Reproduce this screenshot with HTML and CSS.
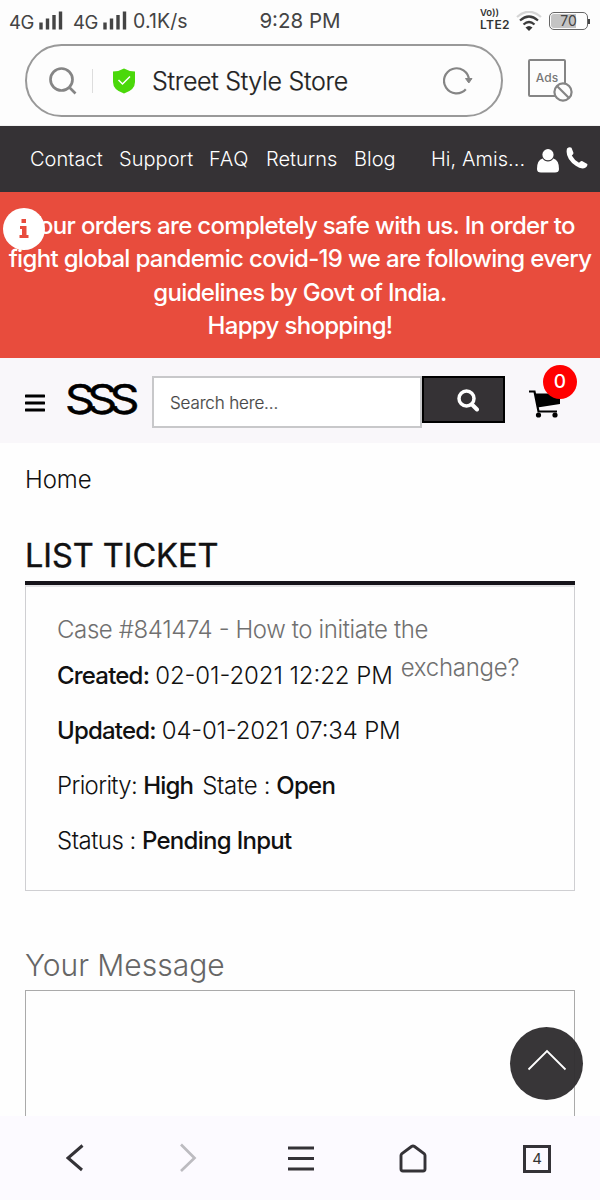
FILE: index.html
```html
<!DOCTYPE html>
<html lang="en">
<head>
<meta charset="utf-8">
<title>Street Style Store</title>
<link rel="stylesheet" href="styles.css">
</head>
<body>
<div class="screen">
  <header class="browser">
    <div class="status">
      <div class="status-left">
        <span class="net">4G</span>
        <svg class="bars" width="24" height="19" viewBox="0 0 24 19"><path d="M2 18.500v-7M8.500 18.500v-11M15 18.500V4M21.500 18.500V0.500" stroke="#444" stroke-width="3.400" fill="none"/></svg>
        <span class="net net-second">4G</span>
        <svg class="bars" width="24" height="19" viewBox="0 0 24 19"><path d="M2 18.500v-7M8.500 18.500v-11M15 18.500V4M21.500 18.500V0.500" stroke="#444" stroke-width="3.400" fill="none"/></svg>
        <span class="speed">0.1K/s</span>
      </div>
      <div class="time">9:28 PM</div>
      <div class="status-right">
        <div class="volte"><span class="vo">Vo))</span><span class="lte">LTE2</span></div>
        <svg class="wifi" width="26" height="20" viewBox="0 0 26 20"><g fill="none" stroke-width="2.200"><path d="M1 6Q13-4.500 25 6" stroke="#d5d5d5"/><path d="M4 9.500q9-8 18 0M7.500 13.500q5.500-5 11 0" stroke="#3c3c3c"/></g><path d="M9.500 16.500q3.500-3 7 0L13 20z" fill="#333"/></svg>
        <div class="battery"><span class="level">70</span></div>
      </div>
    </div>
    <div class="address-row">
      <div class="address">
        <svg class="find" width="28" height="28" viewBox="0 0 28 28"><g fill="none" stroke="#858585" stroke-width="2.700"><circle cx="12.500" cy="12.500" r="11"/><path d="M20 20l6.500 6.500"/></g></svg>
        <span class="split"></span>
        <svg class="shield" width="24" height="26" viewBox="0 0 24 26"><path d="M12 .5Q17 3.500 23 3.500V14q0 8-11 11.500Q1 22 1 14V3.500Q7 3.500 12 .5z" fill="#4ad80a"/><path d="M6.500 12l4 4 7.500-7.500" fill="none" stroke="#fff" stroke-width="1.500"/></svg>
        <span class="site">Street Style Store</span>
        <svg class="reload" width="30" height="30" viewBox="0 0 30 30"><path d="M22.800 23.200A12.500 12.500 0 1 1 26 14" fill="none" stroke="#858585" stroke-width="2.200"/><path d="M22.500 12.500h6.500l-3.200 4.500z" fill="#858585" stroke="#858585" stroke-linejoin="round"/></svg>
      </div>
      <div class="ads">Ads<svg class="ads-stop" width="20" height="20" viewBox="0 0 20 20"><g fill="#fdfdfd" stroke="#858585" stroke-width="2.200"><circle cx="10" cy="10" r="8.600"/><path d="M4 4l12 12"/></g></svg></div>
    </div>
  </header>
  <nav class="topnav">
    <a class="n-contact">Contact</a><a class="n-support">Support</a><a class="n-faq">FAQ</a><a class="n-returns">Returns</a><a class="n-blog">Blog</a><a class="n-user">Hi, Amis...</a>
    <svg class="person" width="22" height="24" viewBox="0 0 22 24"><path d="M5.600 9.500Q0 11 0 20q0 3.500 4 3.500h14q4 0 4-3.500 0-9-5.600-10.500Q14.500 12.500 11 12.500T5.600 9.500z" fill="#fff"/><circle cx="11" cy="5.700" r="5.600" fill="#fff"/></svg>
    <svg class="phone" width="22" height="22" viewBox="0 0 22 22"><path d="M1 1.500Q3.500-.5 5.500.8L7.500 6Q7.500 7 5.800 8.500 8.500 13.500 13 15.800 14.800 13.700 16 14L21.300 17q.6 2-1.600 3.500-4 2.500-10-1.700Q-1.300 11 1 1.500z" fill="#fff"/></svg>
  </nav>
  <section class="notice">
    <p><span class="l1">Your orders are completely safe with us. In order to</span><br><span class="l2">fight global pandemic covid-19 we are following every</span><br><span class="l3">guidelines by Govt of India.</span><br><span class="l4">Happy shopping!</span></p>
    <div class="info"><svg width="10" height="20" viewBox="0 0 10 20"><path d="M2.500 0h4.500v4H2.500zM1 7h6.500v9H9.500v3H.5v-3h2.500v-6H1z" fill="#e84c3d"/></svg></div>
  </section>
  <section class="shop">
    <svg class="burger" width="20" height="18" viewBox="0 0 20 18"><path d="M1 2h18M1 9h18M1 16h18" stroke="#000" stroke-width="3.200" stroke-linecap="round"/></svg>
    <div class="logo"><span>SSS</span></div>
    <div class="search">Search here...</div>
    <div class="go"><svg width="22" height="23" viewBox="0 0 22 23"><circle cx="9.500" cy="9.500" r="7.500" fill="none" stroke="#fff" stroke-width="3.500"/><path d="M15 15.500l5 5" stroke="#fff" stroke-width="4" stroke-linecap="round"/></svg></div>
    <div class="cart"><svg width="32" height="28" viewBox="0 0 32 28"><path d="M0 1.500h5.500L9.500 21.500H28" fill="none" stroke="#000" stroke-width="2.200"/><path d="M6 3.500h25V14L8.500 17.500z"/><circle cx="9.500" cy="25" r="2.600"/><circle cx="26" cy="25" r="2.600"/></svg><span class="count">0</span></div>
  </section>
  <main class="content">
    <div class="crumb"><span>Home</span></div>
    <h1><span>LIST TICKET</span></h1>
    <div class="ticket">
      <div class="case"><span>Case #841474 - How to initiate the</span></div>
      <div class="row"><b>Created:</b><span class="v1">02-01-2021 12:22 PM</span><span class="tail">exchange?</span></div>
      <div class="row"><b class="upd">Updated:</b><span class="v2">04-01-2021 07:34 PM</span></div>
      <div class="row"><span class="pri">Priority:</span><b class="high">High</b><span class="state">State :</span><b class="open">Open</b></div>
      <div class="row"><span class="stat">Status :</span><b class="pend">Pending Input</b></div>
    </div>
    <h2><span>Your Message</span></h2>
    <div class="message"></div>
    <div class="to-top"><svg width="40" height="22" viewBox="0 0 40 22"><path d="M1.500 20.500L20 2l18.500 18.500" fill="none" stroke="#fff" stroke-width="1.800"/></svg></div>
  </main>
  <footer class="tools">
    <svg class="back" width="18" height="28" viewBox="0 0 18 28"><path d="M16.500 1.500L2 14l14 12" fill="none" stroke="#343237" stroke-width="3"/></svg>
    <svg class="forward" width="18" height="30" viewBox="0 0 18 30"><path d="M2 1.500L15.500 15 2 28" fill="none" stroke="#bcbbc0" stroke-width="2.700"/></svg>
    <svg class="menu" width="26" height="25" viewBox="0 0 26 25"><path d="M0 2h26M0 12.500h26M0 23h26" stroke="#343237" stroke-width="2.800"/></svg>
    <svg class="home" width="28" height="29" viewBox="0 0 28 29"><path d="M2 11.500q0-1 1-2L12.500 2.500q1.500-1 3 0L25 9.500q1 1 1 2V25q0 2-2 2H4q-2 0-2-2z" fill="none" stroke="#343237" stroke-width="2.900"/></svg>
    <div class="tabs">4</div>
  </footer>
</div>
</body>
</html>
```
FILE: styles.css
```css
* { box-sizing: border-box; }
body { margin: 0; background: #fefefe; font-family: Inter, "Liberation Sans", sans-serif; font-weight: 300; }
svg { display: block; flex: none; }
span, a, b { white-space: nowrap; }
.screen { width: 600px; height: 1200px; display: flex; flex-direction: column; overflow: hidden; }
.browser { height: 126px; flex: none; background: #fdfdfd; border-bottom: 1px solid #f2f2f2; }
.status { height: 41px; display: grid; grid-template-columns: 240px 120px 240px; align-items: center; color: #444; font-weight: 400; }
.status-left { display: flex; align-items: center; padding-left: 9px; font-size: 18.500px; }
.net { width: 30px; padding-top: 3px; letter-spacing: -.4px; }
.net-second { margin-left: 10px; }
.speed { margin-left: 6px; font-size: 19.500px; letter-spacing: .1px; }
.time { text-align: center; font-size: 20.500px; }
.status-right { display: flex; align-items: center; padding-left: 120px; }
.volte { width: 30px; display: flex; flex-direction: column; font-weight: 600; color: #333; }
.vo { font-size: 9.500px; line-height: 10px; }
.lte { font-size: 12px; line-height: 14px; letter-spacing: .4px; margin-bottom: 1px; }
.wifi { margin-left: 6px; }
.battery { margin-left: 7px; width: 39px; height: 18px; border: 1px solid #666; border-radius: 5px; background: linear-gradient(90deg, #c4c4c4 25px, #fdfdfd 25px) content-box; padding: 1px; font-size: 14px; line-height: 14px; text-align: center; position: relative; }
.battery::after { content: ""; position: absolute; right: -3px; top: 6px; width: 2px; height: 5px; background: #444; }
.address-row { display: flex; padding: 3px 28px 0 25px; }
.address { width: 478px; height: 73px; border: 2px solid #999; border-radius: 37px; display: flex; align-items: center; padding-left: 22px; }
.find { margin-top: 1px; }
.split { width: 1px; height: 24px; background: #ddd; margin-left: 15px; }
.shield { margin-left: 19px; }
.site { width: 281px; margin-left: 16px; font-size: 25px; color: #222; letter-spacing: -.3px; -webkit-text-stroke: .25px #222; }
.reload { margin-left: 10px; }
.ads { width: 38px; height: 38px; margin: 15px 0 0 25px; border: 2px solid #858585; border-radius: 2px; color: #777; font-size: 12px; font-weight: 500; line-height: 34px; text-align: center; position: relative; }
.ads-stop { position: absolute; left: 23px; top: 21px; }
.topnav { height: 66px; flex: none; background: #353235; display: flex; align-items: center; padding-left: 30px; color: #fff; font-size: 20px; letter-spacing: .05px; }
.n-contact { width: 89px; } .n-support { width: 90px; } .n-faq { width: 57px; letter-spacing: .7px; } .n-returns { width: 88px; letter-spacing: 0; } .n-blog { width: 77px; letter-spacing: 0; } .n-user { width: 106px; }
.person { margin-top: 4px; }
.phone { margin: -2px 0 0 7px; }
.notice { height: 166px; flex: none; background: #e84c3d; color: #fff; position: relative; padding-top: 17px; }
.notice p { margin: 0; text-align: center; font-size: 24px; line-height: 33.300px; font-weight: 500; letter-spacing: -.68px; }
.info { position: absolute; left: 3px; top: 16px; width: 42px; height: 42px; border-radius: 50%; background: #fff; display: grid; place-items: center; }
.shop { height: 85px; flex: none; background: #f9f7fa; display: flex; padding-left: 25px; }
.burger { margin-top: 36px; }
.logo { width: 85px; margin-left: 20px; margin-top: 17px; font-size: 41px; line-height: 48px; font-weight: 400; letter-spacing: -6.800px; color: #000; -webkit-text-stroke: .5px #000; }
.logo span { display: inline-block; transform: scaleX(1.14); transform-origin: left center; }
.search { margin: 18px 0 0 2px; width: 270px; height: 52px; border: 2px solid #c8c8ca; background: #fff; padding-left: 16px; line-height: 51px; font-size: 17px; letter-spacing: -.15px; color: #444; -webkit-text-stroke: .2px #555; }
.go { margin-top: 18px; width: 83px; height: 47px; background: #353235; border: 2px solid #000; padding: 11px 0 0 33px; }
.cart { margin: 32px 0 0 24px; position: relative; width: 32px; height: 28px; }
.count { position: absolute; left: 14px; top: -25px; width: 34px; height: 34px; border-radius: 50%; background: #f00; color: #fff; font-size: 19px; font-weight: 500; line-height: 34px; text-align: center; }
.content { flex: 1; min-height: 0; padding: 0 25px; position: relative; overflow: hidden; }
.crumb { padding-top: 19px; height: 72px; font-size: 24px; letter-spacing: -.1px; line-height: 36px; color: #111; }
h1 { margin: 0; height: 70px; border-bottom: 4px solid #16141a; padding-top: 21px; font-size: 32.500px; font-weight: 400; letter-spacing: -.05px; line-height: 40px; color: #111; -webkit-text-stroke: .4px #111; }
.ticket { height: 306px; border: 1px solid #cfcfd2; border-top: 2px solid #e4e4e6; padding: 24px 0 0 31px; font-size: 24px; color: #111; }
.case { height: 37px; line-height: 37px; color: #707070; letter-spacing: -.39px; font-feature-settings: "case"; }
.row { height: 55px; line-height: 55px; display: flex; }
.row b { font-weight: 500; letter-spacing: -.8px; margin-right: 6px; }
.v1 { letter-spacing: -.08px; font-feature-settings: "case"; }
.v2 { letter-spacing: -.2px; font-feature-settings: "case"; }
.tail { color: #707070; margin: -8px 0 0 8px; letter-spacing: -.25px; }
.pri { letter-spacing: -.65px; }
.stat { letter-spacing: -.5px; }
.state { letter-spacing: -.3px; }
.row .high { margin-left: 6px; margin-right: 9px; }
.row .open, .row .pend { margin-left: 6px; letter-spacing: -.7px; }
h2 { margin: 51px 0 0; height: 48px; line-height: 46px; font-size: 30px; font-weight: 300; color: #666; }
.message { height: 200px; border: 1px solid #aaa; }
.to-top { position: absolute; left: 510px; top: 584px; width: 73px; height: 73px; border-radius: 50%; background: rgba(48,46,48,.96); display: grid; place-items: center; padding-bottom: 8px; }
.tools { height: 84px; flex: none; background: #fcfaff; display: flex; align-items: center; padding-left: 66px; }
.forward { margin-left: 95px; }
.menu { margin-left: 91px; }
.home { margin-left: 85px; }
.tabs { margin: 2px 0 0 96px; width: 28px; height: 28px; border: 3px solid #343237; font-size: 15px; line-height: 22px; text-align: center; color: #333; font-weight: 400; }
```
